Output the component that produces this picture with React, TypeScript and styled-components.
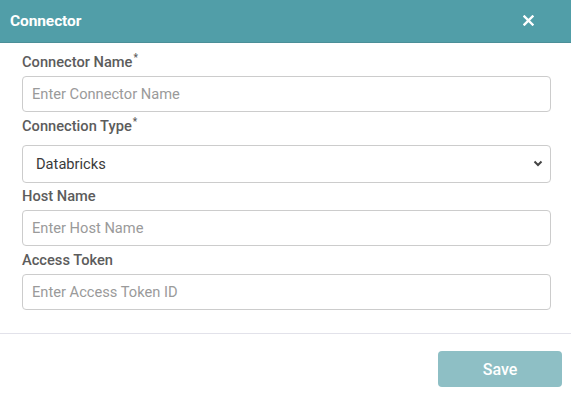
import styled, { createGlobalStyle } from "styled-components";

const GlobalStyle = createGlobalStyle`
  body {
    margin: 0;
    background: #ffffff;
    font-family: Roboto, "Liberation Sans", Arial, sans-serif;
  }
  * {
    box-sizing: border-box;
  }
`;

const Modal = styled.div`
  width: 571px;
  height: 401px;
  display: flex;
  flex-direction: column;
  background: #ffffff;
`;

const Header = styled.div`
  height: 43px;
  display: flex;
  align-items: center;
  justify-content: space-between;
  padding: 0 37px 1px 10px;
  background: #519ea8;
  border-bottom: 1px solid #4b8f98;
`;

const Title = styled.h2`
  margin: 0;
  font-size: 15.5px;
  font-weight: 700;
  color: #ffffff;
  letter-spacing: -0.1px;
`;

const CloseButton = styled.button`
  border: none;
  background: none;
  padding: 0;
  display: flex;
  cursor: pointer;
`;

const Body = styled.div`
  display: flex;
  flex-direction: column;
  padding: 5px 20px 23px 22px;
`;

const Label = styled.label<{ $gap?: number }>`
  display: block;
  margin-top: ${(p) => p.$gap ?? 4}px;
  font-size: 14.67px;
  line-height: 20px;
  font-weight: 500;
  color: #5c5c5c;
`;

const Star = styled.sup`
  font-size: 10px;
  line-height: 0;
  margin-left: 1px;
`;

const Input = styled.input`
  display: block;
  width: 100%;
  height: 36px;
  margin-top: 4px;
  padding: 0 9px;
  border: 1px solid #cccccc;
  border-radius: 4px;
  font-family: inherit;
  font-size: 14.67px;
  color: #333333;
  outline: none;
  &::placeholder {
    color: #9a9a9a;
  }
`;

const SelectWrap = styled.div`
  position: relative;
  margin-top: 9px;
`;

const Select = styled.select`
  display: block;
  width: 100%;
  height: 38px;
  padding: 0 13px;
  border: 1px solid #cccccc;
  border-radius: 4px;
  background: #ffffff;
  font-family: inherit;
  font-size: 14.67px;
  color: #3a3a3a;
  appearance: none;
  outline: none;
`;

const Chevron = styled.svg`
  position: absolute;
  right: 8px;
  top: 15px;
  pointer-events: none;
`;

const Footer = styled.div`
  display: flex;
  justify-content: flex-end;
  border-top: 1px solid #e2e2ea;
  padding: 17px 9px 0 0;
`;

const SaveButton = styled.button`
  width: 124px;
  height: 36px;
  border: none;
  border-radius: 4px;
  background: #8ebfc5;
  color: #ffffff;
  font-family: inherit;
  font-size: 16px;
  font-weight: 500;
  cursor: pointer;
`;

export default function App() {
  return (
    <>
      <GlobalStyle />
      <Modal>
        <Header>
          <Title>Connector</Title>
          <CloseButton aria-label="Close">
            <svg width="11" height="11" viewBox="0 0 11 11">
              <path
                d="M1.5 1.5 L9.5 9.5 M9.5 1.5 L1.5 9.5"
                stroke="#ffffff"
                strokeWidth="2.4"
                strokeLinecap="square"
              />
            </svg>
          </CloseButton>
        </Header>
        <Body>
          <Label>
            Connector Name<Star>*</Star>
          </Label>
          <Input placeholder="Enter Connector Name" />
          <Label>
            Connection Type<Star>*</Star>
          </Label>
          <SelectWrap>
            <Select defaultValue="databricks">
              <option value="databricks">Databricks</option>
            </Select>
            <Chevron width="10" height="7" viewBox="0 0 10 7">
              <path
                d="M1.5 1.5 L5 5 L8.5 1.5"
                fill="none"
                stroke="#444444"
                strokeWidth="2"
              />
            </Chevron>
          </SelectWrap>
          <Label $gap={3}>Host Name</Label>
          <Input placeholder="Enter Host Name" />
          <Label>Access Token</Label>
          <Input placeholder="Enter Access Token ID" />
        </Body>
        <Footer>
          <SaveButton>Save</SaveButton>
        </Footer>
      </Modal>
    </>
  );
}
